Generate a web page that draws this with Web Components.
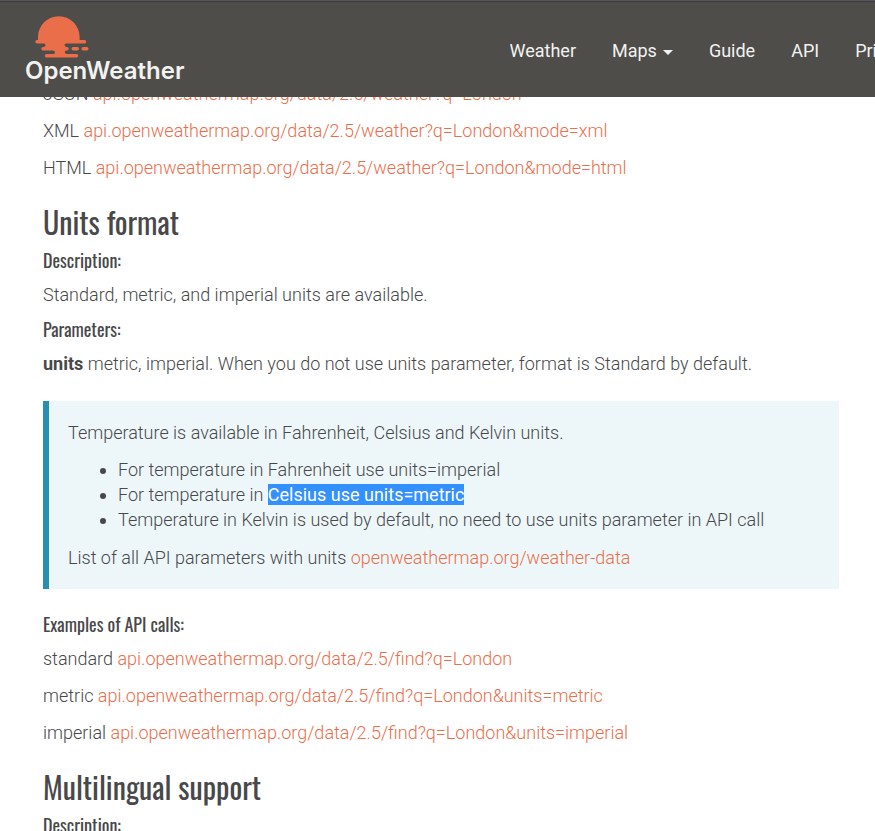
<!DOCTYPE html>
<html lang="en">
<head>
<meta charset="utf-8">
<title>OpenWeather API</title>
<style>
body{margin:0;background:#fff;color:#48484a;font:300 18px/25px Roboto,"Liberation Sans",sans-serif}
</style>
</head>
<body>
<doc-page></doc-page>
<script>
function define(name, html) {
  customElements.define(name, class extends HTMLElement {
    constructor() {
      super();
      this.attachShadow({mode: "open"}).innerHTML = html;
    }
  });
}

define("brand-logo", `
<style>
:host{display:block}
a{display:flex;flex-direction:column;color:#f2f2f0;text-decoration:none;font:600 24px/25px Inter,"Liberation Sans",sans-serif}
svg{display:block;margin-left:10px}
</style>
<a href="#" aria-label="OpenWeather"><svg width="54" height="42" viewBox="0 0 54 42" fill="#eb6e4b" aria-hidden="true">
<path d="M3 23.500V21A20.800 20.800 0 0 1 44.600 21V24H49.500A1.700 1.700 0 0 1 49.500 27.500H31.500Q29.500 27.500 29.500 29T31.500 31H32A1.700 1.700 0 0 1 32 34.500H31.500Q29.700 34.500 29.700 36T31.500 38H41.500A1.700 1.700 0 0 1 41.500 41.500H11.500A1.700 1.700 0 0 1 11.500 38H18Q20 38 20 36.500T18 34.500H8A1.700 1.700 0 0 1 8 31H8.500Q10.500 31 10.500 29.200T8.500 27.500H2A1.700 1.700 0 0 1 2 24H3Z"/>
<rect x="36.500" y="31" width="7.500" height="3.500" rx="1.750"/><rect x="46.500" y="31" width="7" height="3.500" rx="1.750"/>
</svg><span>OpenWeather</span></a>`);

define("nav-item", `
<style>
:host{display:block;flex:none}
a{display:flex;align-items:center;gap:6px;color:#f2f2f2;text-decoration:none}
i{display:none;margin-top:3px;border:5px solid transparent;border-top-color:#f2f2f2;border-bottom:0}
:host([menu]) i{display:block}
</style>
<a href="#"><slot></slot><i></i></a>`);

define("site-header", `
<style>
:host{display:block;position:sticky;top:0;z-index:1;background:#4e4d49;border-top:1px solid #56565c;box-shadow:inset 0 1px #3b3b3f}
header{display:flex;justify-content:space-between;align-items:center;padding:15px 0 14px 25px}
nav{flex:0 0 43%;display:flex;gap:36px;overflow:hidden;padding-top:2px;font-weight:400}
</style>
<header><brand-logo></brand-logo>
<nav aria-label="Main"><nav-item>Weather</nav-item><nav-item menu>Maps</nav-item><nav-item>Guide</nav-item><nav-item>API</nav-item><nav-item>Pricing</nav-item></nav></header>`);

define("section-title", `
<style>
:host{display:block;margin:24px 0 10px}
h2{margin:0;font:400 30px/36px Oswald,"Roboto Condensed","Liberation Sans Narrow",sans-serif}
</style><h2><slot></slot></h2>`);

define("sub-title", `
<style>
:host{display:block;margin:0 0 12px}
h4{margin:0;font:400 18px/20px Oswald,"Roboto Condensed","Liberation Sans Narrow",sans-serif}
</style><h4><slot></slot></h4>`);

define("doc-text", `
<style>
:host{display:block;margin:0 0 12px}
p{margin:0}
</style><p><slot></slot></p>`);

define("doc-link", `
<style>:host{display:inline}a{color:#eb6e4b;text-decoration:none}</style><a href="#"><slot></slot></a>`);

define("note-box", `
<style>
:host{display:block;margin:25px 0;padding:19px 20px 7px 19px;border-left:6px solid #2790b0;background:#edf7fa}
</style><slot></slot>`);

define("doc-page", `
<style>
:host{display:block;height:100vh;overflow:hidden}
main{margin-top:-16px;padding:0 36px 0 43px}
ul{margin:0 0 13px;padding-left:50px}
b{font-weight:700}
mark{background:#3390ff;color:#fff;font-weight:400}
</style>
<site-header></site-header>
<main>
<doc-text>JSON <doc-link>api.openweathermap.org/data/2.5/weather?q=London</doc-link></doc-text>
<doc-text>XML <doc-link>api.openweathermap.org/data/2.5/weather?q=London&amp;mode=xml</doc-link></doc-text>
<doc-text>HTML <doc-link>api.openweathermap.org/data/2.5/weather?q=London&amp;mode=html</doc-link></doc-text>
<section-title>Units format</section-title>
<sub-title>Description:</sub-title>
<doc-text>Standard, metric, and imperial units are available.</doc-text>
<sub-title>Parameters:</sub-title>
<doc-text><b>units</b> metric, imperial. When you do not use units parameter, format is Standard by default.</doc-text>
<note-box>
<doc-text>Temperature is available in Fahrenheit, Celsius and Kelvin units.</doc-text>
<ul><li>For temperature in Fahrenheit use units=imperial</li><li>For temperature in <mark>Celsius use units=metric</mark></li><li>Temperature in Kelvin is used by default, no need to use units parameter in API call</li></ul>
<doc-text>List of all API parameters with units <doc-link>openweathermap.org/weather-data</doc-link></doc-text>
</note-box>
<sub-title>Examples of API calls:</sub-title>
<doc-text>standard <doc-link>api.openweathermap.org/data/2.5/find?q=London</doc-link></doc-text>
<doc-text>metric <doc-link>api.openweathermap.org/data/2.5/find?q=London&amp;units=metric</doc-link></doc-text>
<doc-text>imperial <doc-link>api.openweathermap.org/data/2.5/find?q=London&amp;units=imperial</doc-link></doc-text>
<section-title>Multilingual support</section-title>
<sub-title>Description:</sub-title>
</main>`);
</script>
</body>
</html>
